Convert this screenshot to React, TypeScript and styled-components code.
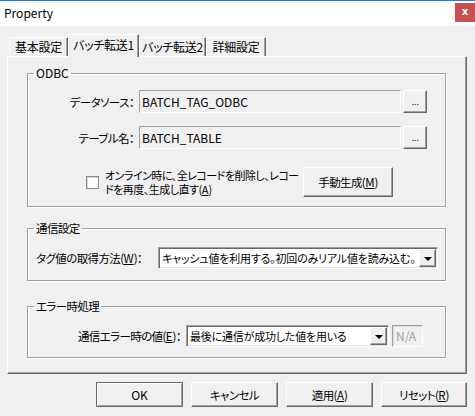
import styled, { createGlobalStyle } from "styled-components";

const GlobalStyle = createGlobalStyle`
  html, body {
    margin: 0;
    padding: 0;
    background: #f0f0f0;
  }
  body {
    font-family: "Noto Sans CJK JP", "Noto Sans", sans-serif;
    font-size: 12px;
    color: #000;
  }
  * {
    box-sizing: border-box;
  }
`;

const Window = styled("div")`
  width: 475px;
  height: 416px;
  background: #f0f0f0;
  display: flex;
  flex-direction: column;
  overflow: hidden;
  font-feature-settings: "palt";
`;

const TitleBar = styled("div")`
  height: 26px;
  flex: 0 0 26px;
  background: #fff;
  border-top: 1px solid #1883d7;
  display: flex;
  align-items: flex-start;
  justify-content: space-between;
  padding-left: 4px;
`;

const Title = styled("span")`
  line-height: 24px;
  font-size: 12px;
`;

const CloseButton = styled("div")`
  width: 20px;
  height: 19px;
  margin-top: 2px;
  background: #c75050;
  color: #fff;
  font-family: "DejaVu Sans", sans-serif;
  font-weight: bold;
  font-size: 10px;
  line-height: 18px;
  text-align: center;
`;

const Body = styled("div")`
  padding: 8px 8px 0 7px;
  display: flex;
  flex-direction: column;
`;

// Japanese label text: Meiryo UI is narrower than Noto CJK, so tighten it
const Jp = styled("span")<{ $size?: number; $spacing?: number }>`
  font-size: ${(p) => p.$size ?? 11.5}px;
  letter-spacing: ${(p) => p.$spacing ?? -0.6}px;
`;

const TabRow = styled("div")`
  display: flex;
  align-items: flex-end;
  height: 22px;
  padding-left: 2px;
  position: relative;
  z-index: 1;
`;

const Tab = styled("div")<{ $active?: boolean; $width: number }>`
  width: ${(p) => p.$width}px;
  height: ${(p) => (p.$active ? 23 : 19)}px;
  margin-bottom: ${(p) => (p.$active ? -1 : 0)}px;
  background: #f0f0f0;
  border: 1px solid;
  border-bottom: none;
  border-color: #fff #696969 transparent #fff;
  box-shadow: inset -1px 0 0 #a0a0a0;
  display: flex;
  align-items: center;
  justify-content: center;
  padding-bottom: ${(p) => (p.$active ? 2 : 0)}px;
  white-space: nowrap;
  line-height: 14px;
`;

const Panel = styled("div")`
  width: 460px;
  height: 318px;
  border: 1px solid;
  border-color: #fff #696969 #696969 #fff;
  box-shadow: inset -1px -1px 0 #a0a0a0;
  padding: 9px 20px 0 19px;
  display: flex;
  flex-direction: column;
`;

const Group = styled("fieldset")<{ $gap?: number; $pt: number; $pb: number }>`
  margin: ${(p) => p.$gap ?? 0}px 0 0 0;
  padding: ${(p) => p.$pt}px 0 ${(p) => p.$pb}px 0;
  border: 1px solid #a0a0a0;
  box-shadow: 1px 1px 0 #fff, inset 1px 1px 0 #fff;
  min-width: 0;
`;

const Legend = styled("legend")`
  padding: 0 2px;
  margin-left: 6px;
  line-height: 14px;
  font-size: 12px;
`;

const Rows = styled("div")`
  display: flex;
  flex-direction: column;
  gap: 13px;
`;

const Row = styled("div")`
  display: flex;
  align-items: center;
`;

const FieldLabel = styled("span")<{ $width: number; $align?: "left" | "right" }>`
  width: ${(p) => p.$width}px;
  flex: 0 0 ${(p) => p.$width}px;
  text-align: ${(p) => p.$align ?? "right"};
  padding: ${(p) => (p.$align === "left" ? "0 0 0 8px" : "0 5px 0 0")};
  white-space: nowrap;
  line-height: 14px;
`;

const TextField = styled("div")`
  width: 262px;
  height: 23px;
  border: 1px solid;
  border-color: #a0a0a0 #fff #fff #a0a0a0;
  background: #f0f0f0;
  padding-left: 2px;
  line-height: 21px;
  white-space: nowrap;
`;

const raised = `
  background: #f0f0f0;
  border: 1px solid;
  border-color: #fff #696969 #696969 #fff;
  box-shadow: inset -1px -1px 0 #a0a0a0;
`;

const BrowseButton = styled("div")`
  ${raised}
  width: 24px;
  height: 23px;
  margin-left: 2px;
  text-align: center;
  line-height: 22px;
  font-family: "DejaVu Sans", sans-serif;
  font-size: 9px;
  letter-spacing: -0.5px;
`;

const CheckRow = styled("div")`
  display: flex;
  align-items: center;
  padding-left: 58px;
  margin-top: 18px;
`;

const CheckBox = styled("div")`
  width: 13px;
  height: 13px;
  flex: 0 0 13px;
  background: #fff;
  border: 1px solid #8a8a8a;
  box-shadow: inset 1px 1px 0 #d8d8d8;
`;

const CheckText = styled("div")`
  width: 204px;
  flex: 0 0 204px;
  padding-left: 6px;
  line-height: 14px;
  white-space: nowrap;
  font-size: 11px;
  letter-spacing: -0.5px;
`;

const PushButton = styled("div")<{ $width: number; $height: number; $default?: boolean }>`
  ${raised}
  width: ${(p) => p.$width}px;
  height: ${(p) => p.$height}px;
  display: flex;
  align-items: center;
  justify-content: center;
  white-space: nowrap;
  line-height: 14px;
  ${(p) =>
    p.$default &&
    `
    border-color: #696969;
    box-shadow: inset 1px 1px 0 #fff, inset -1px -1px 0 #a0a0a0;
  `}
`;

const U = styled("span")`
  text-decoration: underline;
  letter-spacing: 0;
`;

const Combo = styled("div")<{ $width: number }>`
  width: ${(p) => p.$width}px;
  height: 22px;
  background: #fff;
  border: 1px solid;
  border-color: #a0a0a0 #fff #fff #a0a0a0;
  box-shadow: inset 1px 1px 0 #696969, inset -1px -1px 0 #e3e3e3;
  display: flex;
  align-items: center;
  padding: 1px 1px 1px 3px;
`;

const ComboText = styled("span")`
  flex: 1;
  overflow: hidden;
  white-space: nowrap;
  line-height: 14px;
  font-size: 11px;
  letter-spacing: -0.2px;
`;

const ArrowButton = styled("div")`
  ${raised}
  width: 17px;
  height: 18px;
  flex: 0 0 17px;
  display: flex;
  align-items: center;
  justify-content: center;
`;

const Arrow = styled("div")`
  width: 0;
  height: 0;
  border-left: 4px solid transparent;
  border-right: 4px solid transparent;
  border-top: 4px solid #000;
  margin-top: 1px;
`;

const DisabledField = styled("div")`
  width: 31px;
  height: 22px;
  margin-left: 3px;
  border: 1px solid;
  border-color: #a0a0a0 #fff #fff #a0a0a0;
  box-shadow: inset 1px 1px 0 #dcdcdc;
  color: #a0a0a0;
  padding-left: 3px;
  line-height: 20px;
`;

const ButtonBar = styled("div")`
  display: flex;
  justify-content: flex-end;
  gap: 8px;
  margin-top: 8px;
`;

const ComboBox = ({ width, text }: { width: number; text: string }) => (
  <Combo $width={width}>
    <ComboText>{text}</ComboText>
    <ArrowButton>
      <Arrow />
    </ArrowButton>
  </Combo>
);

const App = () => {
  return (
    <Window>
      <GlobalStyle />
      <TitleBar>
        <Title>Property</Title>
        <CloseButton>x</CloseButton>
      </TitleBar>
      <Body>
        <TabRow>
          <Tab $width={59}>
            <Jp $size={12} $spacing={-0.3}>基本設定</Jp>
          </Tab>
          <Tab $width={71} $active>
            <Jp $size={12} $spacing={-0.3}>バッチ転送1</Jp>
          </Tab>
          <Tab $width={67}>
            <Jp $size={12} $spacing={-0.3}>バッチ転送2</Jp>
          </Tab>
          <Tab $width={60}>
            <Jp $size={12} $spacing={-0.3}>詳細設定</Jp>
          </Tab>
        </TabRow>
        <Panel>
          <Group $pt={10} $pb={9}>
            <Legend>ODBC</Legend>
            <Rows>
              <Row>
                <FieldLabel $width={111}>
                  <Jp>データソース：</Jp>
                </FieldLabel>
                <TextField>BATCH_TAG_ODBC</TextField>
                <BrowseButton>...</BrowseButton>
              </Row>
              <Row>
                <FieldLabel $width={111}>
                  <Jp>テーブル名：</Jp>
                </FieldLabel>
                <TextField>BATCH_TABLE</TextField>
                <BrowseButton>...</BrowseButton>
              </Row>
            </Rows>
            <CheckRow>
              <CheckBox />
              <CheckText>
                オンライン時に、全レコードを削除し、レコー
                <br />
                ドを再度、生成し直す(<U>A</U>)
              </CheckText>
              <PushButton $width={90} $height={30}>
                <Jp>
                  手動生成(<U>M</U>)
                </Jp>
              </PushButton>
            </CheckRow>
          </Group>

          <Group $gap={14} $pt={12} $pb={11}>
            <Legend>
              <Jp>通信設定</Jp>
            </Legend>
            <Row>
              <FieldLabel $width={130} $align="left">
                <Jp>
                  タグ値の取得方法(<U>W</U>)：
                </Jp>
              </FieldLabel>
              <ComboBox
                width={280}
                text="キャッシュ値を利用する。初回のみリアル値を読み込む。"
              />
            </Row>
          </Group>

          <Group $gap={18} $pt={12} $pb={10}>
            <Legend>
              <Jp>エラー時処理</Jp>
            </Legend>
            <Row>
              <FieldLabel $width={158}>
                <Jp>
                  通信エラー時の値(<U>E</U>)：
                </Jp>
              </FieldLabel>
              <ComboBox width={203} text="最後に通信が成功した値を用いる" />
              <DisabledField>N/A</DisabledField>
            </Row>
          </Group>
        </Panel>
        <ButtonBar>
          <PushButton $width={87} $height={25} $default>
            OK
          </PushButton>
          <PushButton $width={87} $height={25}>
            <Jp>キャンセル</Jp>
          </PushButton>
          <PushButton $width={87} $height={25}>
            <Jp>
              適用(<U>A</U>)
            </Jp>
          </PushButton>
          <PushButton $width={86} $height={25}>
            <Jp>
              リセット(<U>R</U>)
            </Jp>
          </PushButton>
        </ButtonBar>
      </Body>
    </Window>
  );
};

export default App;
